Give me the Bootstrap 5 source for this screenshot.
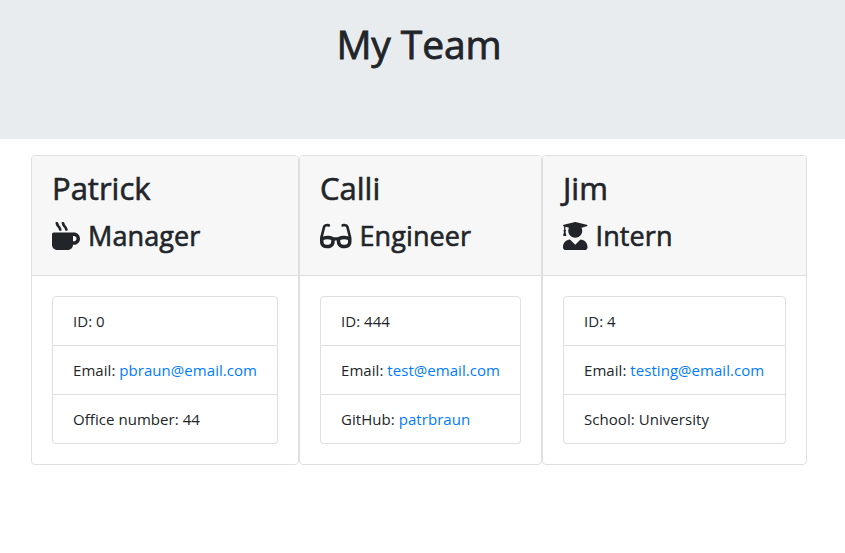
<!DOCTYPE html>
<html lang="en">
<head>
<meta charset="utf-8">
<meta name="viewport" content="width=device-width, initial-scale=1">
<title>My Team</title>
<link href="https://cdn.jsdelivr.net/npm/bootstrap@5.3.0/dist/css/bootstrap.min.css" rel="stylesheet">
<style>
body { font-family: "Segoe UI", "Open Sans", "Noto Sans", sans-serif; color: #212529; }
.team-banner { height: 139px; padding-top: 20px; padding-right: 7px; background: #e9ecef; }
.team-banner h1 { font-size: 39px; line-height: 48px; letter-spacing: -.1px; -webkit-text-stroke: .8px currentColor; }
.team-row { padding: 16px 38px 0 31px; }
.member { --bs-card-border-color: #dfdfdf; --bs-card-border-radius: 4px; --bs-card-inner-border-radius: 3px; --bs-card-cap-bg: #f7f7f7; height: 310px; }
.member-manager { width: 268px; }
.member-engineer { width: 243px; }
.member-intern { width: 265px; }
.member .card-header { height: 120px; padding: 13px 20px; flex: none; }
.member h2 { font-size: 31px; line-height: 38px; margin-bottom: 10px; letter-spacing: 0; -webkit-text-stroke: .6px currentColor; }
.member h3 { font-size: 27px; line-height: 38px; letter-spacing: .1px; gap: 8px; }
.member h3 span { -webkit-text-stroke: .6px currentColor; }
.member h3 svg { height: 28px; fill: currentColor; flex: none; }
.member .card-body { padding: 20px; }
.member .list-group { --bs-list-group-border-color: #dfdfdf; --bs-list-group-border-radius: 4px; font-size: 15px; letter-spacing: .05px; }
.member .list-group-item { padding: 12px 0 12px 20px; line-height: 24px; white-space: nowrap; color: #212529; }
.member a { color: #007bff; }
</style>
</head>
<body>
<header class="team-banner text-center"><h1 class="mb-0">My Team</h1></header>
<main class="team-row d-flex">
  <section class="card member member-manager">
    <div class="card-header">
      <h2>Patrick</h2>
      <h3 class="d-flex align-items-center mb-0"><svg viewBox="0 0 512 512" aria-hidden="true"><path d="M127.1 146.5c1.3 7.7 8 13.5 16 13.5h16.5c9.8 0 17.6-8.5 16.3-18-3.8-28.2-16.4-54.2-36.6-74.7-14.4-14.7-23.6-33.3-26.4-53.5C111.8 5.9 105 0 96.8 0H80.4C70.6 0 63 8.5 64.1 18c3.9 31.9 18 61.3 40.6 84.4 12 12.2 19.7 27.5 22.4 44.1zm112 0c1.3 7.7 8 13.5 16 13.5h16.5c9.8 0 17.6-8.5 16.3-18-3.8-28.2-16.4-54.2-36.6-74.7-14.4-14.7-23.6-33.3-26.4-53.5C223.8 5.9 217 0 208.8 0h-16.4c-9.8 0-17.5 8.5-16.3 18 3.9 31.9 18 61.3 40.6 84.4 12 12.2 19.7 27.5 22.4 44.1zM400 192H32c-17.7 0-32 14.3-32 32v192c0 53 43 96 96 96h192c53 0 96-43 96-96h16c61.8 0 112-50.2 112-112s-50.2-112-112-112zm0 160h-16v-96h16c26.5 0 48 21.5 48 48s-21.5 48-48 48z"/></svg><span>Manager</span></h3>
    </div>
    <div class="card-body">
      <ul class="list-group">
        <li class="list-group-item">ID: 0</li>
        <li class="list-group-item">Email: <a class="text-decoration-none" href="mailto:pbraun@email.com">pbraun@email.com</a></li>
        <li class="list-group-item">Office number: 44</li>
      </ul>
    </div>
  </section>
  <section class="card member member-engineer">
    <div class="card-header">
      <h2>Calli</h2>
      <h3 class="d-flex align-items-center mb-0"><svg viewBox="0 0 576 512" aria-hidden="true"><path d="M574.1 280.37L528.75 98.66c-5.91-23.7-21.59-44.05-43-55.81-21.44-11.73-46.97-14.11-70.19-6.33l-15.25 5.08c-8.39 2.79-12.92 11.86-10.12 20.24l5.06 15.18c2.79 8.38 11.85 12.91 20.23 10.12l13.18-4.39c10.87-3.62 23-3.57 33.16 1.73 10.29 5.37 17.57 14.56 20.37 25.82l38.46 153.82c-22.19-6.81-49.79-12.46-81.2-12.46-34.77 0-73.98 7.02-114.85 26.74h-73.18c-40.87-19.74-80.08-26.75-114.86-26.75-31.42 0-59.02 5.65-81.21 12.46l38.46-153.83c2.79-11.25 10.09-20.45 20.38-25.81 10.16-5.3 22.28-5.35 33.15-1.73l13.17 4.39c8.38 2.79 17.44-1.74 20.23-10.12l5.06-15.18c2.8-8.38-1.73-17.45-10.12-20.24l-15.25-5.08c-23.22-7.78-48.75-5.41-70.19 6.33-21.41 11.77-37.09 32.11-43 55.8L1.9 280.37A64.218 64.218 0 0 0 0 295.86v70.25C0 429.01 51.58 480 115.2 480h37.12c60.28 0 110.37-45.94 114.88-105.37l2.93-38.63h35.75l2.93 38.63C313.31 434.06 363.4 480 423.68 480h37.12c63.62 0 115.2-50.99 115.2-113.88v-70.25c0-5.23-.64-10.43-1.9-15.5zm-370.72 89.42c-1.97 25.91-24.4 46.21-51.06 46.21H115.2C86.97 416 64 393.62 64 366.11v-37.54c18.12-6.49 43.42-12.92 72.58-12.92 23.86 0 47.26 4.33 69.93 12.92l-3.13 41.22zM512 366.12c0 27.51-22.97 49.88-51.2 49.88h-37.12c-26.67 0-49.1-20.3-51.06-46.21l-3.13-41.22c22.67-8.59 46.08-12.92 69.95-12.92 29.12 0 54.43 6.44 72.55 12.93v37.54z"/></svg><span>Engineer</span></h3>
    </div>
    <div class="card-body">
      <ul class="list-group">
        <li class="list-group-item">ID: 444</li>
        <li class="list-group-item">Email: <a class="text-decoration-none" href="mailto:test@email.com">test@email.com</a></li>
        <li class="list-group-item">GitHub: <a class="text-decoration-none" href="https://github.com/patrbraun">patrbraun</a></li>
      </ul>
    </div>
  </section>
  <section class="card member member-intern">
    <div class="card-header">
      <h2>Jim</h2>
      <h3 class="d-flex align-items-center mb-0"><svg viewBox="0 0 448 512" aria-hidden="true"><path d="M319.4 320.6L224 416l-95.4-95.4C57.1 323.7 0 382.2 0 454.4v9.6c0 26.5 21.5 48 48 48h352c26.5 0 48-21.5 48-48v-9.6c0-72.2-57.1-130.7-128.6-133.8zM13.6 79.8l6.4 1.5v58.4c-7 4.2-12 11.5-12 20.3 0 8.4 4.6 15.4 11.1 19.7L3.5 242c-1.7 6.9 2.1 14 7.6 14h41.8c5.5 0 9.3-7.1 7.6-14l-15.6-62.3C51.4 175.4 56 168.4 56 160c0-8.8-5-16.1-12-20.3V87.1l66 15.9c-8.6 17.2-14 36.4-14 57 0 70.7 57.3 128 128 128s128-57.3 128-128c0-20.6-5.3-39.8-14-57l96.3-23.2c18.2-4.4 18.2-27.1 0-31.5l-190.4-46c-13-3.1-26.7-3.1-39.7 0L13.6 48.2c-18.1 4.4-18.1 27.2 0 31.6z"/></svg><span>Intern</span></h3>
    </div>
    <div class="card-body">
      <ul class="list-group">
        <li class="list-group-item">ID: 4</li>
        <li class="list-group-item">Email: <a class="text-decoration-none" href="mailto:testing@email.com">testing@email.com</a></li>
        <li class="list-group-item">School: University</li>
      </ul>
    </div>
  </section>
</main>
<script src="https://cdn.jsdelivr.net/npm/bootstrap@5.3.0/dist/js/bootstrap.bundle.min.js"></script>
</body>
</html>
